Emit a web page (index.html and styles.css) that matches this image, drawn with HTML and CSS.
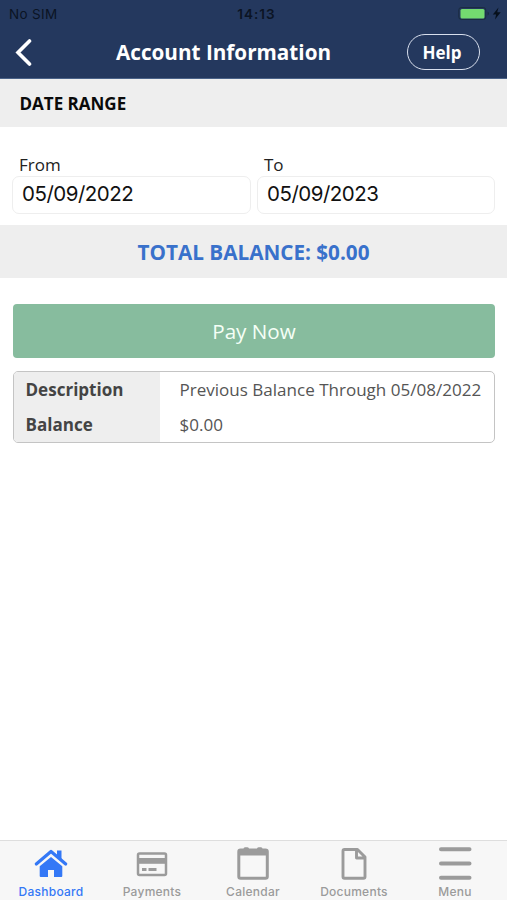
FILE: index.html
```html
<!DOCTYPE html>
<html lang="en">
<head>
<meta charset="utf-8">
<meta name="viewport" content="width=device-width, initial-scale=1">
<title>Account Information</title>
<link rel="stylesheet" href="styles.css">
</head>
<body>
<div class="app">
  <header class="header">
    <div class="status">
      <span class="carrier">No SIM</span>
      <span class="clock">14:13</span>
      <span class="power">
        <svg width="44" height="16" viewBox="0 0 44 16">
          <rect x=".8" y="1.500" width="27" height="12" rx="2.500" fill="none" stroke="#1b2c40"/>
          <rect x="2.500" y="3" width="24" height="9.500" rx="1.500" fill="#74db70"/>
          <path d="M29.500 5.500v4q1.500-.6 1.500-2t-1.500-2z" fill="#1b2c40"/>
          <path d="M40.500 1.500L34.800 8.400h3.300L37 13.500l5.700-7.200h-3.500z" fill="#07101c"/>
        </svg>
      </span>
    </div>
    <div class="navbar">
      <span class="back"><svg width="20" height="28" viewBox="0 0 20 28"><path d="M16.500 3L5 14.500 16.500 26" fill="none" stroke="#fff" stroke-width="3.600" stroke-linecap="round" stroke-linejoin="miter"/></svg></span>
      <h1 class="title">Account Information</h1>
      <button class="help">Help</button>
    </div>
  </header>
  <main class="content">
    <h2 class="section">DATE RANGE</h2>
    <div class="range">
      <label class="field"><span class="label">From</span><span class="value">05/09/2022</span></label>
      <label class="field"><span class="label">To</span><span class="value">05/09/2023</span></label>
    </div>
    <div class="total">TOTAL BALANCE: $0.00</div>
    <button class="pay">Pay Now</button>
    <dl class="details">
      <dt>Description</dt><dd>Previous Balance Through 05/08/2022</dd>
      <dt>Balance</dt><dd>$0.00</dd>
    </dl>
  </main>
  <nav class="tabs">
    <a class="tab active">
      <svg width="36" height="36" viewBox="0 0 36 36"><path d="M24 5.500h4.500v9L24 10.500z" fill="currentColor"/><path d="M3.300 19L18 6.500 32.700 19" fill="none" stroke="currentColor" stroke-width="3.200" stroke-linecap="round" stroke-linejoin="round"/><path d="M18 12l11.300 9.300V31q0 1-1 1H21v-7h-6v7H7.700q-1 0-1-1V21.300z" fill="currentColor"/></svg>
      <span>Dashboard</span>
    </a>
    <a class="tab">
      <svg width="36" height="36" viewBox="0 0 36 36"><rect x="4" y="8.500" width="28" height="21.500" rx="1.500" fill="none" stroke="currentColor" stroke-width="2.500"/><path d="M4 13h28v5.800H4z" fill="currentColor"/><path d="M8 24.500h4.500M14.500 24.500h8" fill="none" stroke="currentColor" stroke-width="2.800"/></svg>
      <span>Payments</span>
    </a>
    <a class="tab">
      <svg width="36" height="36" viewBox="0 0 36 36"><rect x="3.800" y="5" width="28.500" height="28.300" rx="1.800" fill="none" stroke="currentColor" stroke-width="3"/><path d="M4 4h28v6.500H4zM8.500 4q0-1.800 1.500-1.800h2.500q1.500 0 1.500 1.800zM22 4q0-1.800 1.500-1.800H26q1.500 0 1.500 1.800z" fill="currentColor"/></svg>
      <span>Calendar</span>
    </a>
    <a class="tab">
      <svg width="36" height="36" viewBox="0 0 36 36"><path d="M21.500 4.500H8.500Q7 4.500 7 6v25.800q0 1.500 1.500 1.500h19q1.500 0 1.500-1.500V12zM20.500 4.500V13H29" fill="none" stroke="currentColor" stroke-width="2.900" stroke-linejoin="round"/></svg>
      <span>Documents</span>
    </a>
    <a class="tab">
      <svg width="36" height="36" viewBox="0 0 36 36"><path d="M4 4.300h28.500M4 18.500h28.500M4 32.700h28.500" fill="none" stroke="currentColor" stroke-width="4" stroke-linecap="round"/></svg>
      <span>Menu</span>
    </a>
  </nav>
</div>
</body>
</html>
```
FILE: styles.css
```css
* { box-sizing: border-box; margin: 0; padding: 0; }
body { background: #fff; font-family: "Open Sans", sans-serif; color: #111; }
button { font: inherit; }
.app { height: 900px; display: flex; flex-direction: column; }
.header { height: 79px; background: #24385e; border-bottom: 1px solid #4a6288; }
.status { height: 27px; display: grid; grid-template-columns: 1fr auto 1fr; align-items: center; padding: 0 5px 0 9px; font-family: Inter, sans-serif; font-size: 13.500px; color: #0b1424; }
.carrier { letter-spacing: .35px; }
.clock { font-weight: 600; letter-spacing: 1px; padding-left: 2px; }
.power { justify-self: end; height: 16px; }
.power svg, .back svg, .tab svg { display: block; }
.navbar { height: 50px; display: grid; grid-template-columns: 100px 1fr 100px; align-items: center; }
.back { padding-left: 13px; }
.title { justify-self: start; padding-left: 16px; color: #fff; font-size: 20.700px; font-weight: 700; line-height: 28px; white-space: nowrap; }
.help { width: 73px; height: 36px; border: 1.500px solid #d8dfed; border-radius: 18px; background: transparent; color: #fff; font-size: 17px; font-weight: 700; padding-right: 3px; }
.content { flex: 1; }
.section { height: 48px; background: #eee; padding-left: 19.500px; font-size: 17px; line-height: 50px; font-weight: 700; color: #0a0a0a; }
.range { height: 98px; padding: 27px 12px 0; display: grid; grid-template-columns: 239px 238px; gap: 6px; }
.field { display: block; }
.label { display: block; padding-left: 7px; height: 22px; font-size: 17px; line-height: 22px; color: #222; }
.value { display: block; height: 38px; border: 1px solid #eee; border-radius: 7px; padding-left: 9px; font-family: Inter, sans-serif; font-size: 20.500px; letter-spacing: -.5px; line-height: 34px; }
.total { height: 53px; background: #eee; text-align: center; color: #3971cb; font-size: 20.700px; line-height: 55px; font-weight: 700; }
.pay { display: block; width: 482px; height: 54px; margin: 26px 0 0 13px; border: 0; border-radius: 4px; background: #87bc9e; color: #f5fff6; font-size: 20.650px; line-height: 54px; }
.details { margin: 13px 12px 0 13px; height: 72px; display: grid; grid-template-columns: 146px 1fr; grid-template-rows: 35px 35px; border: 1px solid #c4c4c4; border-radius: 5px; overflow: hidden; font-size: 17.050px; line-height: 36px; color: #555; white-space: nowrap; }
.details dt { background: #eee; padding-left: 11.500px; font-weight: 700; color: #444; }
.details dd { padding-left: 19.500px; }
.tabs { height: 60px; display: grid; grid-template-columns: repeat(5, 101px); background: #f7f7f7; border-top: 1px solid #dedede; }
.tab { display: flex; flex-direction: column; align-items: center; padding: 4px 0 0 1px; color: #9b9b9b; font: 500 12px/18px Inter, sans-serif; letter-spacing: .25px; }
.tab svg { margin-left: -1px; }
.tab span { margin-top: 2px; }
.active { color: #3478f6; }
```
